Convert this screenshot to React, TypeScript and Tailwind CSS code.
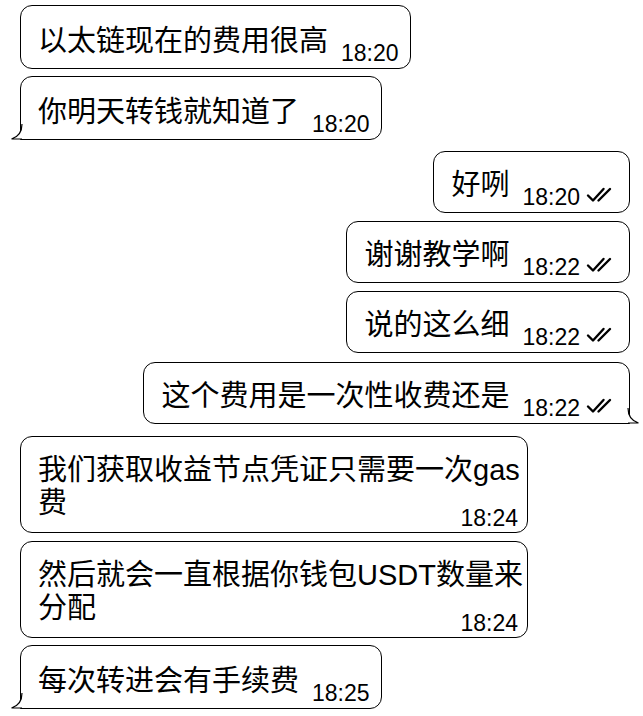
const font = "font-['Liberation_Sans','Noto_Sans_CJK_SC',sans-serif]";

const Checks = () => (
  <svg width="29" height="16" viewBox="0 0 29 16" fill="none" stroke="black" strokeWidth="2.4" strokeLinecap="round" strokeLinejoin="round" className="ml-[6px] mb-[6px]">
    <path d="M2 8.5 L7 13.5 L17.5 2" />
    <path d="M12.5 13.5 L24 2" />
  </svg>
);

const TailLeft = () => (
  <svg width="12" height="16" viewBox="0 0 12 16" className="absolute left-[-10px] bottom-[-1px]">
    <path d="M11 0 C11 8 7 13 0.5 15 L11 15" fill="white" stroke="black" strokeWidth="1.2" />
  </svg>
);

const TailRight = () => (
  <svg width="12" height="16" viewBox="0 0 12 16" className="absolute right-[-10px] bottom-[-1px]">
    <path d="M1 0 C1 8 5 13 11.5 15 L1 15" fill="white" stroke="black" strokeWidth="1.2" />
  </svg>
);

type Msg = { text: string; time: string; tail?: boolean; mt: string };

const Incoming = ({ text, time, tail, mt }: Msg) => (
  <div className={`flex ${mt}`}>
    <div className={`relative flex items-end border border-black rounded-[12px] ${tail ? 'rounded-bl-none' : ''} pl-[17px] pr-[11px] pt-[17px] pb-[3px] bg-white`}>
      <span className="text-[29px] leading-[36px] mb-[6px]">{text}</span>
      <span className="text-[23px] leading-[24px] ml-[13px]">{time}</span>
      {tail && <TailLeft />}
    </div>
  </div>
);

const Outgoing = ({ text, time, tail, mt }: Msg) => (
  <div className={`flex justify-end ${mt}`}>
    <div className={`relative flex items-end border border-black rounded-[12px] ${tail ? 'rounded-br-none' : ''} pl-[17px] pr-[14px] pt-[15px] pb-[3px] bg-white`}>
      <span className="text-[29px] leading-[36px] mb-[6px]">{text}</span>
      <span className="text-[23px] leading-[24px] ml-[13px]">{time}</span>
      <Checks />
      {tail && <TailRight />}
    </div>
  </div>
);

const TwoLine = ({ l1, l2, time, mt }: { l1: string; l2: string; time: string; mt: string }) => (
  <div className={`flex ${mt}`}>
    <div className="w-[508px] border border-black rounded-[12px] pl-[17px] pr-[9px] pt-[17px] pb-[2px] bg-white">
      <div className="text-[29px] leading-[33px] whitespace-nowrap">{l1}</div>
      <div className="flex justify-between items-end">
        <span className="text-[29px] leading-[33px] mb-[10px]">{l2}</span>
        <span className="text-[23px] leading-[24px]">{time}</span>
      </div>
    </div>
  </div>
);

export default function App() {
  return (
    <div className={`w-[643px] h-[716px] overflow-hidden bg-white text-black ${font} pl-[20px] pr-[13px] pt-[5px]`}>
      <Incoming text="以太链现在的费用很高" time="18:20" mt="mt-0" />
      <Incoming text="你明天转钱就知道了" time="18:20" tail mt="mt-[7px]" />
      <Outgoing text="好咧" time="18:20" mt="mt-[11px]" />
      <Outgoing text="谢谢教学啊" time="18:22" mt="mt-[8px]" />
      <Outgoing text="说的这么细" time="18:22" mt="mt-[8px]" />
      <Outgoing text="这个费用是一次性收费还是" time="18:22" tail mt="mt-[9px]" />
      <TwoLine l1="我们获取收益节点凭证只需要一次gas" l2="费" time="18:24" mt="mt-[12px]" />
      <TwoLine l1="然后就会一直根据你钱包USDT数量来" l2="分配" time="18:24" mt="mt-[8px]" />
      <Incoming text="每次转进会有手续费" time="18:25" tail mt="mt-[7px]" />
    </div>
  );
}
